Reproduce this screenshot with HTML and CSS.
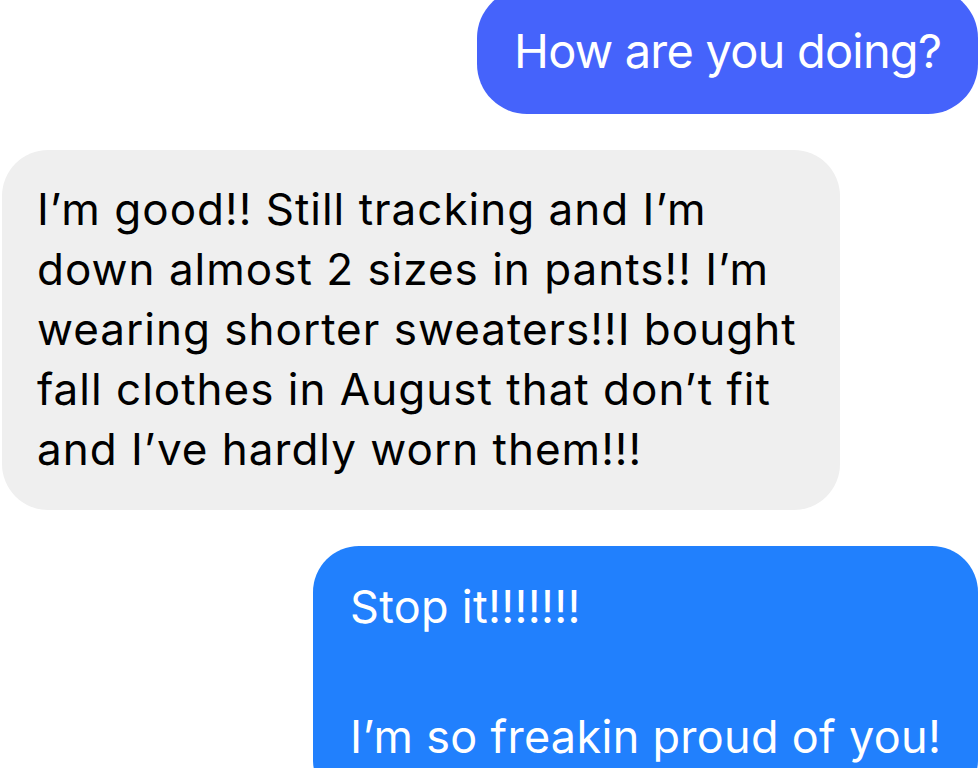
FILE: index.html
```html
<!DOCTYPE html>
<html>
<head>
<meta charset="utf-8">
<link rel="stylesheet" href="styles.css">
</head>
<body>
<div class="thread">
  <div class="row row-out row-first">
    <div class="bubble out-a">How are you doing?</div>
  </div>
  <div class="row row-in">
    <div class="bubble in">I’m good!! Still tracking and I’m<br>down almost 2 sizes in pants!! I’m<br>wearing shorter sweaters!!I bought<br>fall clothes in August that don’t fit<br>and I’ve hardly worn them!!!</div>
  </div>
  <div class="row row-out row-last">
    <div class="bubble out-b">
      <p class="line">Stop it!!!!!!!</p>
      <p class="line gap-line">I’m so freakin proud of you!</p>
    </div>
  </div>
</div>
</body>
</html>
```
FILE: styles.css
```css
html, body {
  margin: 0;
  padding: 0;
  background: #ffffff;
  overflow: hidden;
}
body {
  width: 978px;
  height: 768px;
  font-family: Inter, "Noto Sans", "Liberation Sans", sans-serif;
}
.thread {
  display: flex;
  flex-direction: column;
}
.row {
  display: flex;
}
.row-out {
  justify-content: flex-end;
}
.row-in {
  justify-content: flex-start;
  padding-left: 2px;
  margin-top: 36px;
}
.row-first {
  margin-top: -12px;
}
.row-last {
  margin-top: 36px;
}
.bubble {
  box-sizing: border-box;
  white-space: nowrap;
}
.out-a {
  width: 501px;
  height: 126px;
  background: #4563fb;
  color: #ffffff;
  border-radius: 50px;
  font-size: 47px;
  line-height: 126px;
  padding-left: 37px;
  letter-spacing: -0.8px;
}
.in {
  width: 838px;
  height: 360px;
  background: #efefef;
  color: #000000;
  border-radius: 46px;
  font-size: 44px;
  line-height: 60px;
  padding: 29px 0 0 35px;
  letter-spacing: 1px;
}
.out-b {
  width: 665px;
  height: 260px;
  background: #2180fd;
  color: #ffffff;
  border-radius: 46px;
  font-size: 45px;
  line-height: 65px;
  padding: 28px 0 0 37px;
  letter-spacing: 0.3px;
}
.line {
  margin: 0;
}
.gap-line {
  margin-top: 65px;
}
```
